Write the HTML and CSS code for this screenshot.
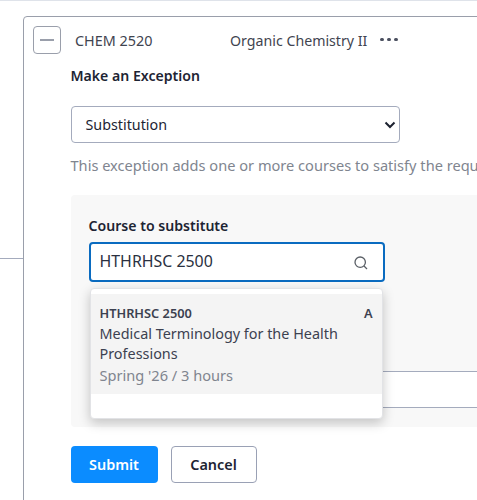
FILE: index.html
```html
<!DOCTYPE html>
<html lang="en">
<head>
<meta charset="utf-8">
<title>Make an Exception</title>
<link rel="stylesheet" href="styles.css">
</head>
<body>
<div class="page">
  <div class="connector"></div>
  <section class="card">
    <header class="course-row">
      <button class="toggle" aria-label="Collapse"><span class="minus"></span></button>
      <span class="code">CHEM 2520</span>
      <span class="name">Organic Chemistry II</span>
      <span class="dots"><i></i><i></i><i></i></span>
    </header>
    <div class="body">
      <h2 class="title">Make an Exception</h2>
      <div class="select">
        <span>Substitution</span>
        <svg class="chev" width="12" height="8" viewBox="0 0 12 8"><path d="M1.500 1.500 6 6l4.500-4.500" fill="none" stroke="#1d2230" stroke-width="2"/></svg>
      </div>
      <p class="help">This exception adds one or more courses to satisfy the requirement.</p>
      <div class="panel">
        <label class="label">Course to substitute</label>
        <div class="combo">
          <div class="input">
            <span>HTHRHSC 2500</span>
            <svg class="search" width="16" height="16" viewBox="0 0 16 16"><circle cx="7.200" cy="7.200" r="5.200" fill="none" stroke="#5a5f66" stroke-width="1.300"/><path d="m11 11 3 3" stroke="#5a5f66" stroke-width="1.300" fill="none"/></svg>
          </div>
          <div class="menu">
            <div class="option">
              <div class="opt-head"><span>HTHRHSC 2500</span><span>A</span></div>
              <div class="opt-name">Medical Terminology for the Health Professions</div>
              <div class="opt-meta">Spring '26 / 3 hours</div>
            </div>
          </div>
        </div>
        <div class="under-field"></div>
      </div>
      <div class="actions">
        <button class="btn primary">Submit</button>
        <button class="btn secondary">Cancel</button>
      </div>
    </div>
  </section>
</div>
</body>
</html>
```
FILE: styles.css
```css
* { box-sizing: border-box; }
html, body { margin: 0; height: 100%; overflow: hidden; background: #fff; }
body { font-family: "Noto Sans", sans-serif; color: #1d2433; }
.page { position: relative; height: 500px; width: 477px; overflow: hidden; border-top: 1px solid #dfe3ea; padding: 15px 0 0 23px; }
.connector { position: absolute; left: 0; top: 257px; width: 23px; height: 1px; background: #a4abbd; }
.card { width: 640px; height: 520px; border: 1.500px solid #9a9fab; border-radius: 4px; padding: 9px 0 0 9px; }
.course-row { display: flex; align-items: center; height: 28px; color: #3f4450; }
.toggle { width: 28px; height: 28px; padding: 0; border: 1.500px solid #9a9fab; border-radius: 4px; background: #fff; display: flex; align-items: center; justify-content: center; }
.minus { width: 14px; height: 1.500px; background: #9a9fab; }
.code { margin-left: 14px; width: 155px; font-size: 14.400px; }
.name { width: 150px; font-size: 14.200px; }
.dots { display: flex; gap: 3.500px; margin-bottom: 1px; }
.dots i { width: 3.500px; height: 3.500px; border-radius: 50%; background: #4b5060; }
.body { padding: 12px 0 0 37.500px; }
.title { margin: 0; font-size: 14.100px; line-height: 20px; font-weight: 600; color: #1d2433; }
.select { margin-top: 20px; width: 329px; height: 37px; border: 1.500px solid #a4abbd; border-radius: 4px; display: flex; align-items: center; justify-content: space-between; padding: 0 3px 0 14px; font-size: 14.300px; color: #1d2433; }
.help { margin: 12px 0 0; font-size: 14.600px; line-height: 20px; color: #80858f; white-space: nowrap; }
.panel { position: relative; margin-top: 20px; width: 480px; height: 232px; background: #f8f8f8; border-radius: 4px; padding: 21px 18px; }
.label { display: block; font-size: 14.100px; line-height: 20px; font-weight: 600; color: #1d2433; }
.combo { position: relative; margin-top: 6px; width: 296px; z-index: 1; }
.input { height: 40px; background: #fff; border: 2px solid #0a6bc0; border-radius: 4px; display: flex; align-items: center; justify-content: space-between; padding: 0 14px 2px 9px; font-size: 15.900px; color: #2a3040; }
.search { margin-top: 3px; }
.menu { position: absolute; left: 1px; top: 46px; width: 293px; height: 131px; background: #fff; border-radius: 4px; border: 1px solid #e2e3e6; padding-top: 5px; box-shadow: 0 4px 12px rgba(0,0,0,.22); }
.option { height: 100px; background: #f4f4f4; padding: 9px 9px 0; }
.opt-head { display: flex; justify-content: space-between; font-size: 12.800px; line-height: 20px; font-weight: 600; color: #3c4150; }
.opt-name { margin-top: 1px; font-size: 14.400px; line-height: 20px; color: #3c4150; }
.opt-meta { margin-top: 1px; font-size: 14.600px; line-height: 20px; color: #80858f; }
.under-field { position: absolute; left: 300px; top: 176px; width: 180px; height: 37px; background: #fff; border-top: 1px solid #a4abbd; border-bottom: 1px solid #a4abbd; }
.actions { display: flex; gap: 13px; margin-top: 19px; }
.btn { height: 37px; border-radius: 4px; font-family: inherit; font-size: 14.400px; font-weight: 600; padding: 0; }
.primary { width: 87px; background: #0b8cff; border: 0; color: #fff; }
.secondary { width: 86px; background: #fff; border: 1.500px solid #9aa1b5; color: #1d2433; }
```
